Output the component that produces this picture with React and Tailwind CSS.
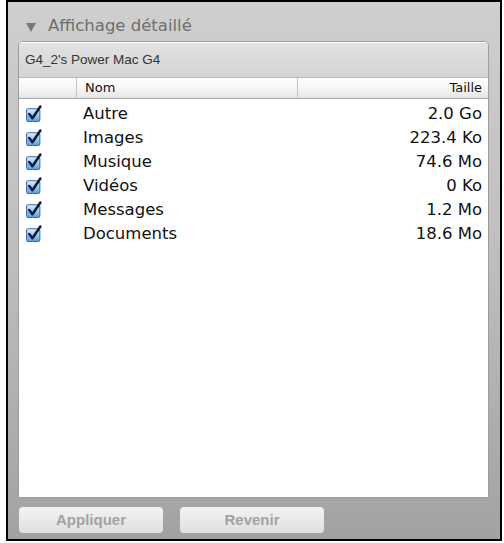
import React from 'react'

const rows = [
  { name: 'Autre', size: '2.0 Go' },
  { name: 'Images', size: '223.4 Ko' },
  { name: 'Musique', size: '74.6 Mo' },
  { name: 'Vidéos', size: '0 Ko' },
  { name: 'Messages', size: '1.2 Mo' },
  { name: 'Documents', size: '18.6 Mo' },
]

function CheckBox() {
  return (
    <svg width="18" height="18" viewBox="0 0 17 17">
      <defs>
        <linearGradient id="cbfill" x1="0" y1="0" x2="0" y2="1">
          <stop offset="0" stopColor="#e6f1fc" />
          <stop offset="0.5" stopColor="#9cc6f0" />
          <stop offset="1" stopColor="#5d9be0" />
        </linearGradient>
      </defs>
      <rect x="1.5" y="3.5" width="12.5" height="12" rx="1.5" fill="url(#cbfill)" stroke="#3a6db0" />
      <path d="M4 8.5 L7 12.5 L14.5 1.5" fill="none" stroke="#0d1c3d" strokeWidth="2.4" strokeLinecap="round" strokeLinejoin="round" />
    </svg>
  )
}

export default function App() {
  return (
    <div className="w-[504px] h-[543px] bg-white">
      <div className="ml-[6px] w-[496px] h-[541px] border-2 border-black bg-gradient-to-b from-[#cfcfcf] via-[#bdbdbd] to-[#a2a2a2] flex flex-col font-['DejaVu_Sans',sans-serif]">
        {/* disclosure header */}
        <div className="h-[39px] flex items-end pb-[4px] pl-[18px] gap-[12px]">
          <svg width="10" height="9" viewBox="0 0 10 9" className="mb-[5px]">
            <path d="M0 0 L10 0 L5 9 Z" fill="#7a7a7a" />
          </svg>
          <span className="text-[16.5px] leading-none text-[#6e6e6e] mb-[3px]">Affichage détaillé</span>
        </div>

        {/* panel */}
        <div className="ml-[10px] mr-[11px] h-[457px] flex flex-col rounded-t-[5px] border border-[#9c9c9c] bg-white overflow-hidden">
          <div className="h-[35px] flex items-center px-[6px] bg-gradient-to-b from-[#e2e2e2] to-[#d4d4d4] border-t border-t-white">
            <span className="font-['Liberation_Sans',sans-serif] text-[13.5px] text-[#333]">G4_2's Power Mac G4</span>
          </div>
          <div className="h-[22px] flex text-[13px] text-[#111] bg-gradient-to-b from-white via-[#f6f6f6] to-[#e6e6e6] border-t border-t-[#b8b8b8] border-b border-b-[#a8a8a8]">
            <div className="w-[58px] border-r border-r-[#c4c4c4]" />
            <div className="w-[221px] pl-[8px] flex items-center border-r border-r-[#c4c4c4]">Nom</div>
            <div className="flex-1 pr-[6px] flex items-center justify-end">Taille</div>
          </div>
          <div className="flex-1 pt-[3px] text-[16.5px] text-[#111]">
            {rows.map(r => (
              <div key={r.name} className="h-[24px] flex items-center">
                <div className="w-[64px] pl-[6px] flex items-center">
                  <CheckBox />
                </div>
                <div className="flex-1">{r.name}</div>
                <div className="pr-[6px]">{r.size}</div>
              </div>
            ))}
          </div>
        </div>

        {/* footer buttons */}
        <div className="flex gap-[17px] pl-[11px] pt-[9px]">
          <button className="w-[144px] h-[26px] rounded-[4px] bg-gradient-to-b from-[#f3f3f3] to-[#e0e0e0] font-['Liberation_Sans',sans-serif] font-bold text-[15px] text-[#a2a2a2]">
            Appliquer
          </button>
          <button className="w-[144px] h-[26px] rounded-[4px] bg-gradient-to-b from-[#f3f3f3] to-[#e0e0e0] font-['Liberation_Sans',sans-serif] font-bold text-[15px] text-[#a2a2a2]">
            Revenir
          </button>
        </div>
      </div>
    </div>
  )
}
